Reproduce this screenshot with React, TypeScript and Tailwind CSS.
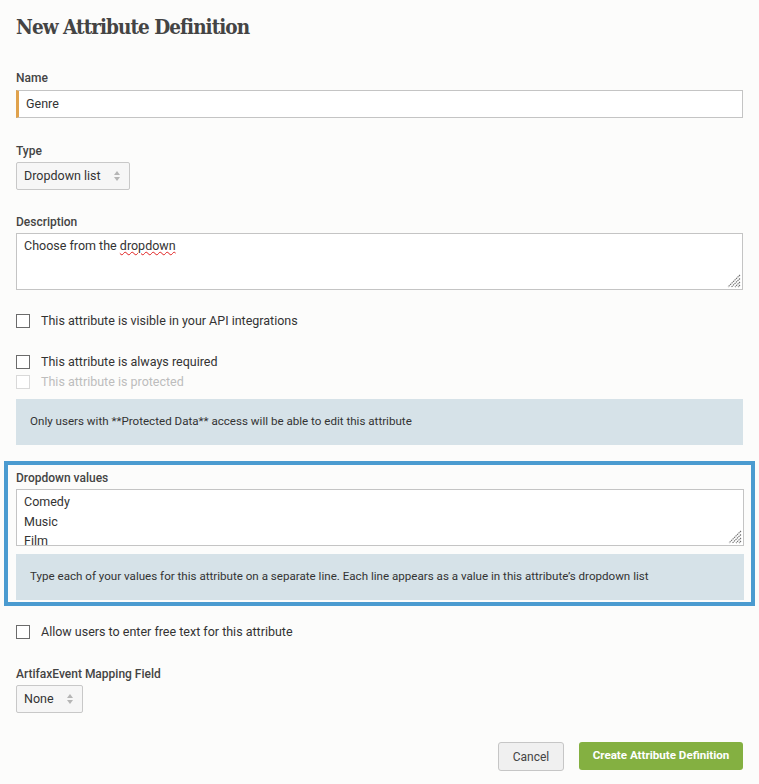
import React from "react";

const SelectArrows = () => (
  <svg width="8" height="12" viewBox="0 0 8 12" className="shrink-0">
    <path d="M4 1 L7 5 L1 5 Z" fill="#b5b5b5" />
    <path d="M4 11 L7 7 L1 7 Z" fill="#b5b5b5" />
  </svg>
);

const Grip = () => (
  <svg width="14" height="14" viewBox="0 0 14 14" className="absolute right-[1px] bottom-[1px]">
    <path
      d="M13 1 L1 13 M13 4.5 L4.5 13 M13 8 L8 13 M13 11 L11 13"
      stroke="#6f6f6f"
      strokeWidth="1.1"
      strokeDasharray="1.4 0.7"
    />
  </svg>
);

const Checkbox = ({ label, disabled }: { label: string; disabled?: boolean }) => (
  <div className="flex items-center h-[20px]">
    <span
      className={
        disabled
          ? "w-[14px] h-[14px] border border-[#d9d9d9] bg-white"
          : "w-[14px] h-[14px] border border-[#6b6b6b] bg-white"
      }
    />
    <span className={disabled ? "ml-[11px] text-[12.5px] text-[#bdbdbd]" : "ml-[11px] text-[12.5px] text-[#333]"}>{label}</span>
  </div>
);

export default function App() {
  return (
    <div
      className="min-h-[784px] bg-[#fcfcfb] text-[#333] px-[16px] pt-[12px]"
      style={{ fontFamily: "Roboto, 'Liberation Sans', sans-serif" }}
    >
      <h1
        className="text-[20.5px] leading-[30px] font-bold text-[#444] tracking-[-0.95px]"
        style={{ fontFamily: "'DejaVu Serif Condensed', 'DejaVu Serif', serif" }}
      >
        New Attribute Definition
      </h1>

      <div className="mt-[28px] text-[12px] leading-[16px] font-medium text-[#444]">Name</div>
      <div className="mt-[4px] h-[28px] bg-white border border-[#c4c4c4] border-l-[3px] border-l-[#e0a24c] flex items-center pl-[7px] text-[12.5px]">
        Genre
      </div>

      <div className="mt-[25px] text-[12px] leading-[16px] font-medium text-[#444]">Type</div>
      <div className="mt-[3px] w-[114px] h-[28px] bg-[#f6f6f6] border border-[#c8c8c8] rounded-[2px] flex items-center justify-between pl-[7px] pr-[8px] text-[12.5px]">
        <span>Dropdown list</span>
        <SelectArrows />
      </div>

      <div className="mt-[24px] text-[12px] leading-[16px] font-medium text-[#444]">Description</div>
      <div className="relative mt-[3px] h-[57px] bg-white border border-[#c4c4c4] px-[7px] pt-[2px] text-[12.5px] leading-[19px]">
        Choose from the{" "}
        <span className="underline decoration-wavy decoration-[#e02020] decoration-1 underline-offset-1">dropdown</span>
        <Grip />
      </div>

      <div className="mt-[21px]">
        <Checkbox label="This attribute is visible in your API integrations" />
      </div>
      <div className="mt-[21px]">
        <Checkbox label="This attribute is always required" />
        <Checkbox label="This attribute is protected" disabled />
      </div>

      <div className="mt-[7px] h-[46px] bg-[#d6e2e8] flex items-center px-[14px] text-[11.6px] text-[#333]">
        Only users with **Protected Data** access will be able to edit this attribute
      </div>

      <div className="mt-[16px] -mx-[12px] border-4 border-[#4b9bd0] pl-[8px] pr-[7px] pt-[5px] pb-[2px]">
        <div className="text-[12px] leading-[16px] font-medium text-[#444]">Dropdown values</div>
        <div className="relative mt-[3px] h-[57px] overflow-hidden bg-white border border-[#c4c4c4] px-[7px] pt-[2px] text-[12.5px] leading-[19.5px]">
          <div>Comedy</div>
          <div>Music</div>
          <div>Film</div>
          <Grip />
        </div>
        <div className="mt-[8px] h-[46px] bg-[#d6e2e8] flex items-center px-[14px] text-[11.6px] text-[#333]">
          Type each of your values for this attribute on a separate line. Each line appears as a value in this attribute’s dropdown list
        </div>
      </div>

      <div className="mt-[16px]">
        <Checkbox label="Allow users to enter free text for this attribute" />
      </div>

      <div className="mt-[24px] text-[12px] leading-[16px] font-medium text-[#444]">ArtifaxEvent Mapping Field</div>
      <div className="mt-[3px] w-[67px] h-[28px] bg-[#f6f6f6] border border-[#c8c8c8] rounded-[2px] flex items-center justify-between pl-[7px] pr-[8px] text-[12.5px]">
        <span>None</span>
        <SelectArrows />
      </div>

      <div className="mt-[29px] flex justify-end gap-[15px]">
        <button className="h-[29px] w-[66px] bg-[#f0f0f0] border border-[#c6c6c6] rounded-[3px] text-[12px] text-[#444]">
          Cancel
        </button>
        <button className="h-[28px] w-[164px] bg-[#84b041] rounded-[3px] text-[11.6px] font-bold text-white">
          Create Attribute Definition
        </button>
      </div>
    </div>
  );
}
